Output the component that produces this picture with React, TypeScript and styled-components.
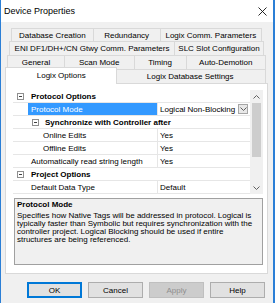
import React from 'react'
import styled, { createGlobalStyle } from 'styled-components'

const GlobalStyle = createGlobalStyle`
  html, body { margin: 0; padding: 0; background: #ffffff; }
  body { font-family: "Liberation Sans", Arial, sans-serif; }
  * { box-sizing: border-box; }
`

type TabDef = { label: string; width: number; active?: boolean }
type TabRowDef = { indent: number; height: number; tabs: TabDef[] }

const tabRows: TabRowDef[] = [
  { indent: 6, height: 13, tabs: [
    { label: 'Database Creation', width: 82 },
    { label: 'Redundancy', width: 67 },
    { label: 'Logix Comm. Parameters', width: 102 },
  ] },
  { indent: 4, height: 14, tabs: [
    { label: 'ENI DF1/DH+/CN Gtwy Comm. Parameters', width: 166 },
    { label: 'SLC Slot Configuration', width: 89 },
  ] },
  { indent: 2, height: 14, tabs: [
    { label: 'General', width: 57 },
    { label: 'Scan Mode', width: 70 },
    { label: 'Timing', width: 52 },
    { label: 'Auto-Demotion', width: 80 },
  ] },
  { indent: 2, height: 14, tabs: [
    { label: 'Logix Options', width: 110, active: true },
    { label: 'Logix Database Settings', width: 149 },
  ] },
]

type RowDef = {
  kind: 'cat' | 'prop'
  label: string
  depth: number
  value?: string
  selected?: boolean
  dropdown?: boolean
}

const rows: RowDef[] = [
  { kind: 'cat', label: 'Protocol Options', depth: 0 },
  { kind: 'prop', label: 'Protocol Mode', depth: 0, value: 'Logical Non-Blocking', selected: true, dropdown: true },
  { kind: 'cat', label: 'Synchronize with Controller after', depth: 1 },
  { kind: 'prop', label: 'Online Edits', depth: 1, value: 'Yes' },
  { kind: 'prop', label: 'Offline Edits', depth: 1, value: 'Yes' },
  { kind: 'prop', label: 'Automatically read string length', depth: 0, value: 'Yes' },
  { kind: 'cat', label: 'Project Options', depth: 0 },
  { kind: 'prop', label: 'Default Data Type', depth: 0, value: 'Default' },
]

const buttons = [
  { label: 'OK', isDefault: true },
  { label: 'Cancel' },
  { label: 'Apply', disabled: true },
  { label: 'Help' },
]

function MinusBox() {
  return (
    <svg width="7" height="7" viewBox="0 0 7 7">
      <rect x="0.5" y="0.5" width="6" height="6" fill="#ffffff" stroke="#8f8f8f" />
      <line x1="2" y1="3.5" x2="5" y2="3.5" stroke="#404040" />
    </svg>
  )
}

function Chevron({ up }: { up?: boolean }) {
  return (
    <svg width="7" height="4" viewBox="0 0 7 4">
      <polyline
        points={up ? '0.5,3.5 3.5,0.5 6.5,3.5' : '0.5,0.5 3.5,3.5 6.5,0.5'}
        fill="none"
        stroke="#606060"
        strokeWidth="1"
      />
    </svg>
  )
}

function App() {
  return (
    <>
      <GlobalStyle />
      <Window>
        <TitleBar>
          <span>Device Properties</span>
          <svg width="9" height="9" viewBox="0 0 9 9">
            <path d="M0.5 0.5 L8.5 8.5 M8.5 0.5 L0.5 8.5" stroke="#111" strokeWidth="0.9" />
          </svg>
        </TitleBar>
        <Body>
          <Tabs>
            {tabRows.map((row, i) => (
              <TabRow key={i} $indent={row.indent} $h={row.height}>
                {row.tabs.map((t) => (
                  <Tab key={t.label} $w={t.width} $active={t.active}>{t.label}</Tab>
                ))}
              </TabRow>
            ))}
          </Tabs>
          <Panel>
            <Grid>
              <GridRows>
                {rows.map((r) => (
                  <GridRow key={r.label}>
                    <Gutter>{r.kind === 'cat' && r.depth === 0 && <MinusBox />}</Gutter>
                    {r.kind === 'cat' ? (
                      <CatName $depth={r.depth}>
                        {r.depth > 0 && <MinusBox />}
                        <span>{r.label}</span>
                      </CatName>
                    ) : (
                      <>
                        <PropName $depth={r.depth} $selected={r.selected}>{r.label}</PropName>
                        <PropValue>
                          <span>{r.value}</span>
                          {r.dropdown && (
                            <DropButton><Chevron /></DropButton>
                          )}
                        </PropValue>
                      </>
                    )}
                  </GridRow>
                ))}
              </GridRows>
              <ScrollBar>
                <ScrollArrow><Chevron up /></ScrollArrow>
                <Thumb />
                <ScrollSpacer />
                <ScrollArrow><Chevron /></ScrollArrow>
              </ScrollBar>
            </Grid>
            <Description>
              <DescTitle>Protocol Mode</DescTitle>
              <DescText>
                Specifies how Native Tags will be addressed in protocol. Logical is<br />
                typically faster than Symbolic but requires synchronization with the<br />
                controller project. Logical Blocking should be used if entire<br />
                structures are being referenced.
              </DescText>
            </Description>
          </Panel>
          <Footer>
            {buttons.map((b) => (
              <DialogButton key={b.label} $default={b.isDefault} $disabled={b.disabled}>
                {b.label}
              </DialogButton>
            ))}
          </Footer>
        </Body>
      </Window>
    </>
  )
}

const Window = styled.div`
  width: 275px;
  height: 303px;
  background: #f0f0f0;
  border-left: 1px solid #2b7fd6;
  border-right: 2px solid #2b7fd6;
  display: flex;
  flex-direction: column;
  overflow: hidden;
  color: #000000;
`

const TitleBar = styled.div`
  height: 22px;
  flex: none;
  background: #ffffff;
  display: flex;
  align-items: center;
  justify-content: space-between;
  padding: 0 6px 0 3px;
  font-size: 9px;
`

const Body = styled.div`
  padding: 6px 5px 0 4px;
`

const Tabs = styled.div`
  display: flex;
  flex-direction: column;
`

const TabRow = styled.div<{ $indent: number; $h: number }>`
  display: flex;
  height: ${(p) => p.$h}px;
  margin: 0 ${(p) => p.$indent}px;
`

const Tab = styled.div<{ $w: number; $active?: boolean }>`
  flex: ${(p) => p.$w} 1 0;
  min-width: 0;
  display: flex;
  align-items: center;
  justify-content: center;
  white-space: nowrap;
  font-size: 8px;
  background: ${(p) => (p.$active ? '#ffffff' : '#f0f0f0')};
  border-top: 1px solid #d9d9d9;
  border-right: 1px solid #d9d9d9;
  &:first-child { border-left: 1px solid #d9d9d9; }
  ${(p) => p.$active && `
    position: relative;
    z-index: 2;
    margin: -2px -2px -1px -2px;
    border-left: 1px solid #d9d9d9;
    padding-bottom: 1px;
  `}
`

const Panel = styled.div`
  height: 191px;
  background: #ffffff;
  border: 1px solid #d9d9d9;
  padding: 6px 4px 0 7px;
`

const Grid = styled.div`
  display: flex;
  height: 104px;
`

const GridRows = styled.div`
  flex: 1;
  display: flex;
  flex-direction: column;
`

const GridRow = styled.div`
  height: 13px;
  display: grid;
  grid-template-columns: 15px 129px 1fr;
  border-bottom: 1px solid #e6e6e6;
  font-size: 8px;
`

const Gutter = styled.div`
  display: flex;
  align-items: center;
  justify-content: center;
  background: #ffffff;
`

const CatName = styled.div<{ $depth: number }>`
  grid-column: 2 / 4;
  display: flex;
  align-items: center;
  gap: 6px;
  padding-left: ${(p) => (p.$depth > 0 ? 4 : 3)}px;
  font-weight: bold;
  white-space: nowrap;
`

const PropName = styled.div<{ $depth: number; $selected?: boolean }>`
  display: flex;
  align-items: center;
  padding-left: ${(p) => (p.$depth > 0 ? 15 : 3)}px;
  white-space: nowrap;
  overflow: hidden;
  background: ${(p) => (p.$selected ? '#3399ff' : 'transparent')};
  color: ${(p) => (p.$selected ? '#ffffff' : '#000000')};
`

const PropValue = styled.div`
  display: flex;
  align-items: center;
  justify-content: space-between;
  padding: 0 2px 0 2px;
  border-left: 1px solid #e6e6e6;
  white-space: nowrap;
`

const DropButton = styled.div`
  width: 10px;
  height: 10px;
  display: flex;
  align-items: center;
  justify-content: center;
  background: #e8e8e8;
  border: 1px solid #a6a6a6;
`

const ScrollBar = styled.div`
  width: 13px;
  background: #f0f0f0;
  display: flex;
  flex-direction: column;
`

const ScrollArrow = styled.div`
  height: 13px;
  display: flex;
  align-items: center;
  justify-content: center;
`

const Thumb = styled.div`
  height: 54px;
  margin: 0 2px;
  background: #cdcdcd;
`

const ScrollSpacer = styled.div`
  flex: 1;
`

const Description = styled.div`
  margin: 4px 0 0 1px;
  width: 249px;
  height: 67px;
  background: #f0f0f0;
  border: 1px solid #a0a0a0;
  padding: 1px 2px;
`

const DescTitle = styled.div`
  font-size: 8px;
  font-weight: bold;
  line-height: 10px;
`

const DescText = styled.div`
  margin-top: 2px;
  font-size: 8px;
  line-height: 8px;
  white-space: nowrap;
`

const Footer = styled.div`
  display: flex;
  gap: 6px;
  margin-top: 8px;
  padding-left: 22px;
`

const DialogButton = styled.div<{ $default?: boolean; $disabled?: boolean }>`
  width: 55px;
  height: 16px;
  display: flex;
  align-items: center;
  justify-content: center;
  font-size: 8px;
  background: ${(p) => (p.$disabled ? '#cccccc' : '#e1e1e1')};
  color: ${(p) => (p.$disabled ? '#8f8f8f' : '#000000')};
  border: 1px solid ${(p) => (p.$default ? '#0078d7' : p.$disabled ? '#bfbfbf' : '#adadad')};
  box-shadow: ${(p) => (p.$default ? 'inset 0 0 0 1px #0078d7' : 'none')};
`

export default App
